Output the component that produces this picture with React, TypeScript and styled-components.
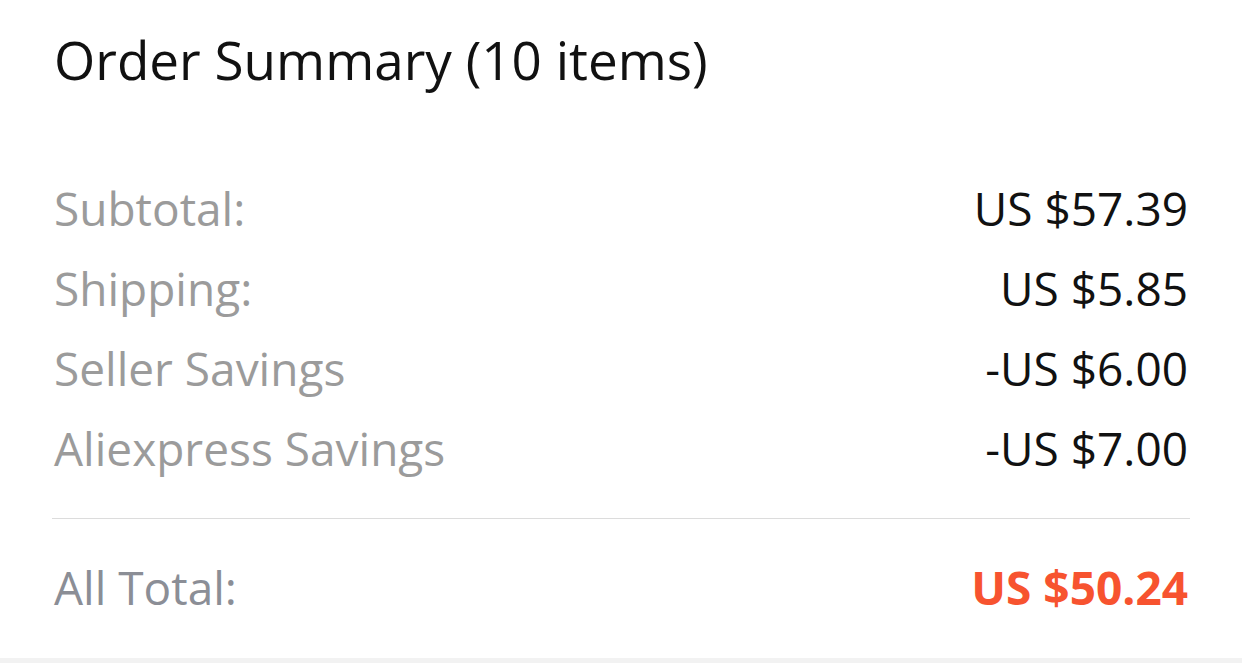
import React from "react";
import styled, { createGlobalStyle } from "styled-components";

const Global = createGlobalStyle`
  html, body {
    margin: 0;
    padding: 0;
    background: #f2f2f2;
  }
  body {
    font-family: "Open Sans", "Noto Sans", sans-serif;
    -webkit-font-smoothing: antialiased;
  }
`;

const Card = styled.section`
  background: #ffffff;
  height: 658px;
  box-sizing: border-box;
  padding: 24px 54px 0 54px;
  display: flex;
  flex-direction: column;
`;

const Title = styled.h1`
  margin: 0;
  font-size: 53px;
  line-height: 72px;
  font-weight: 400;
  color: #111111;
`;

const Rows = styled.div`
  margin-top: 72px;
  display: flex;
  flex-direction: column;
`;

const Row = styled.div`
  display: flex;
  justify-content: space-between;
  align-items: center;
  height: 80px;
  font-size: 46px;
  line-height: 80px;
`;

const Label = styled.span<{ $tone?: "muted" | "total" }>`
  color: ${(p) => (p.$tone === "total" ? "#8b8e96" : "#9b9b9b")};
`;

const Value = styled.span<{ $accent?: boolean }>`
  color: ${(p) => (p.$accent ? "#f7532f" : "#111111")};
  font-weight: ${(p) => (p.$accent ? 700 : 400)};
`;

const Divider = styled.hr`
  border: none;
  height: 1px;
  background: #dcdcdc;
  margin: 30px -2px 28px -2px;
`;

const items = [
  { label: "Subtotal:", value: "US $57.39" },
  { label: "Shipping:", value: "US $5.85" },
  { label: "Seller Savings", value: "-US $6.00" },
  { label: "Aliexpress Savings", value: "-US $7.00" },
];

export default function App() {
  return (
    <>
      <Global />
      <Card>
        <Title>Order Summary (10 items)</Title>
        <Rows>
          {items.map((it) => (
            <Row key={it.label}>
              <Label>{it.label}</Label>
              <Value>{it.value}</Value>
            </Row>
          ))}
        </Rows>
        <Divider />
        <Row>
          <Label $tone="total">All Total:</Label>
          <Value $accent>US $50.24</Value>
        </Row>
      </Card>
    </>
  );
}
